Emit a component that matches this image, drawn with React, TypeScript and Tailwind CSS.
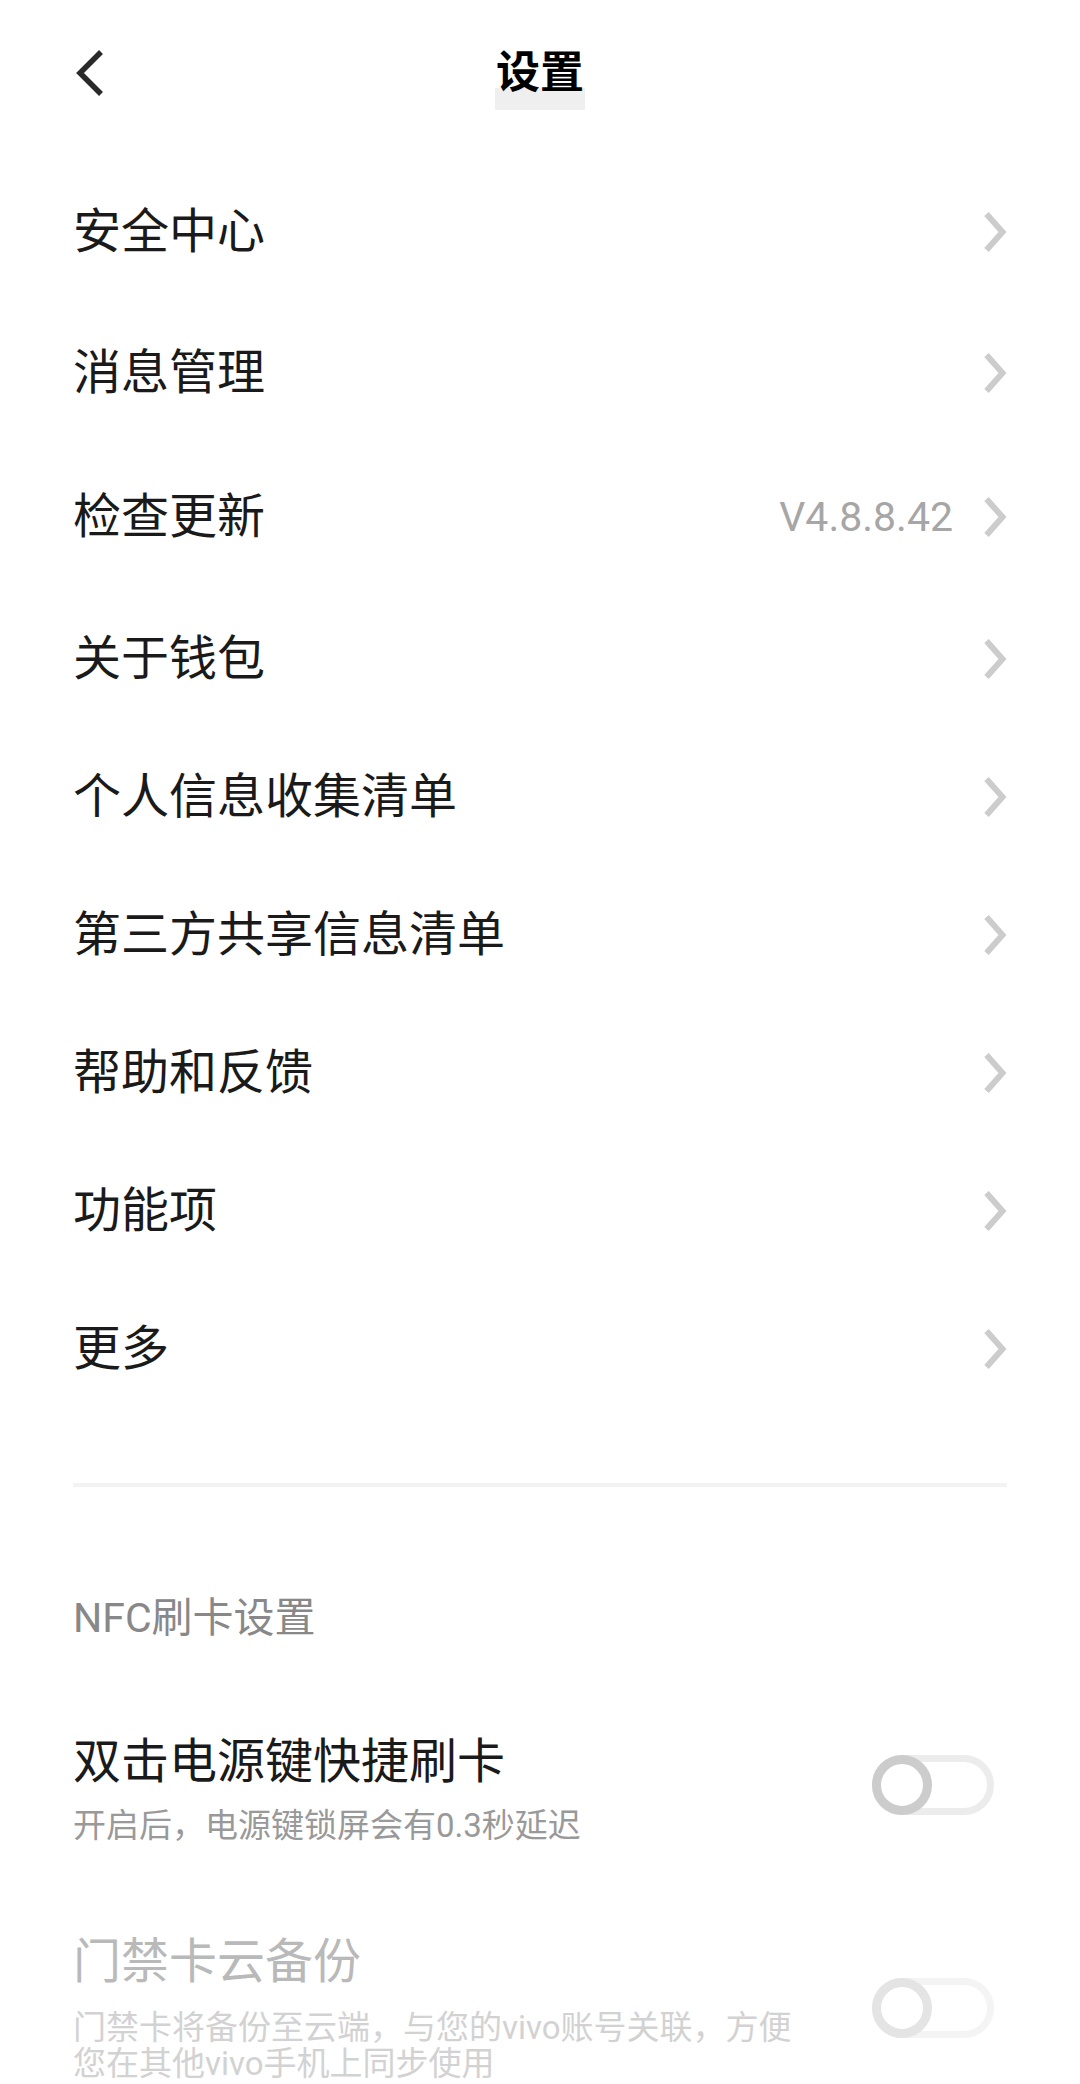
import React from "react";

const font = { fontFamily: '"Roboto", "Noto Sans CJK SC", sans-serif' };

function Chevron() {
  return (
    <svg width="26" height="42" viewBox="0 0 26 42" className="shrink-0">
      <polyline
        points="3.5,3 19.5,21 3.5,39"
        fill="none"
        stroke="#cccccc"
        strokeWidth="6"
        strokeLinejoin="miter"
        strokeLinecap="butt"
      />
    </svg>
  );
}

function BackIcon() {
  return (
    <svg width="30" height="48" viewBox="0 0 30 48">
      <polyline
        points="26,3 5,24 26,45"
        fill="none"
        stroke="#2a2a2a"
        strokeWidth="5.5"
        strokeLinejoin="miter"
        strokeLinecap="butt"
      />
    </svg>
  );
}

function Toggle({ disabled }: { disabled?: boolean }) {
  return (
    <div className="relative w-[122px] h-[60px] shrink-0">
      <div
        className={
          "absolute inset-0 rounded-full border-[7px] " +
          (disabled ? "border-[#f4f4f4]" : "border-[#ececec]")
        }
      />
      <div
        className={
          "absolute left-0 top-0 w-[60px] h-[60px] rounded-full bg-white border-[9px] " +
          (disabled ? "border-[#e4e4e4]" : "border-[#cccccc]")
        }
      />
    </div>
  );
}

const items: { label: string; value?: string; h: string }[] = [
  { label: "安全中心", h: "h-[138px]" },
  { label: "消息管理", h: "h-[143px]" },
  { label: "检查更新", value: "V4.8.8.42", h: "h-[146px]" },
  { label: "关于钱包", h: "h-[138px]" },
  { label: "个人信息收集清单", h: "h-[138px]" },
  { label: "第三方共享信息清单", h: "h-[138px]" },
  { label: "帮助和反馈", h: "h-[138px]" },
  { label: "功能项", h: "h-[138px]" },
  { label: "更多", h: "h-[138px]" },
];

export default function App() {
  return (
    <div className="w-[1080px] h-[2084px] bg-white overflow-hidden" style={font}>
      {/* Header */}
      <div className="grid grid-cols-[1fr_auto_1fr] items-center h-[146px]">
        <div className="pl-[75px] flex items-center">
          <BackIcon />
        </div>
        <div className="relative">
          <div className="absolute left-[-1px] right-[-1px] top-[37px] h-[22px] bg-[#efefef]" />
          <span className="relative block text-[44px] leading-[44px] font-bold text-black">
            设置
          </span>
        </div>
        <div />
      </div>

      {/* List */}
      <div className="pt-[17px]">
        {items.map((it) => (
          <div
            key={it.label}
            className={"flex items-center justify-between pl-[73px] pr-[71px] " + it.h}
          >
            <span className="text-[48px] leading-[56px] text-[#1a1a1a]">{it.label}</span>
            <div className="flex items-center gap-[30px]">
              {it.value && (
                <span className="text-[41px] leading-[48px] text-[#a6a6a6]">{it.value}</span>
              )}
              <Chevron />
            </div>
          </div>
        ))}
      </div>

      {/* Divider */}
      <div className="mx-[73px] mt-[65px] h-[4px] bg-[#f3f3f3]" />

      {/* NFC section */}
      <div className="pl-[73px] mt-[111px] text-[41px] leading-[40px] text-[#888888]">
        NFC刷卡设置
      </div>

      <div className="flex items-start justify-between pl-[73px] pr-[86px] mt-[96px]">
        <div className="flex flex-col">
          <span className="text-[48px] leading-[56px] text-[#1a1a1a]">双击电源键快捷刷卡</span>
          <span className="mt-[17px] text-[33px] leading-[37px] text-[#999999]">
            开启后，电源键锁屏会有0.3秒延迟
          </span>
        </div>
        <div className="mt-[21px]">
          <Toggle />
        </div>
      </div>

      <div className="flex items-center justify-between pl-[73px] pr-[86px] mt-[90px]">
        <div className="flex flex-col">
          <span className="text-[48px] leading-[56px] text-[#b9b9b9]">门禁卡云备份</span>
          <span className="mt-[20px] w-[736px] text-[33px] leading-[36px] text-[#d2d2d2]">
            门禁卡将备份至云端，与您的vivo账号关联，方便您在其他vivo手机上同步使用
          </span>
        </div>
        <Toggle disabled />
      </div>
    </div>
  );
}
